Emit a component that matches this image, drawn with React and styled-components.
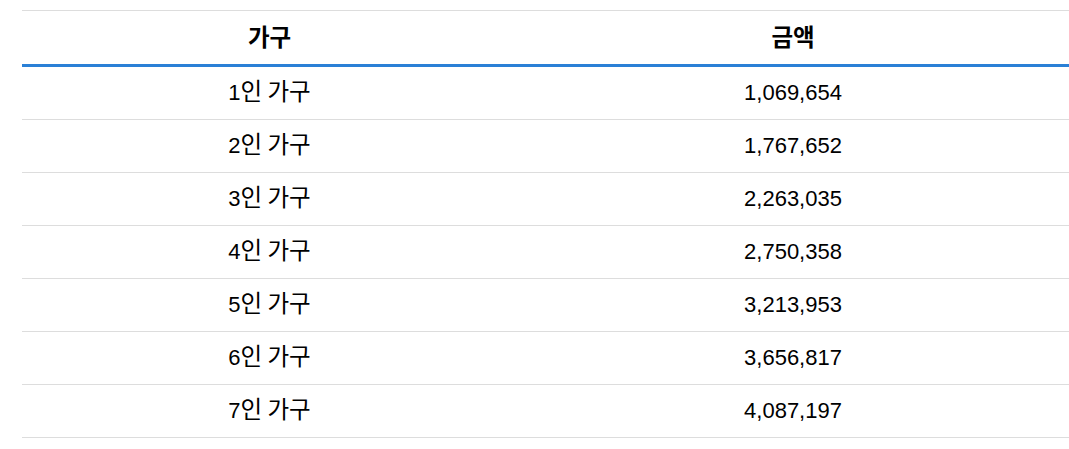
import React from "react";
import styled, { createGlobalStyle } from "styled-components";

const GlobalStyle = createGlobalStyle`
  html, body {
    margin: 0;
    padding: 0;
    background: #fff;
  }

  body {
    font-family: "Liberation Sans", Arial, "Noto Sans CJK KR", sans-serif;
    color: #000;
  }
`;

const Wrapper = styled.div`
  padding: 10px 0 0 22px;
`;

const Table = styled.table`
  width: 1047px;
  border-collapse: collapse;
  table-layout: fixed;
  font-size: 22px;

  col.kind {
    width: 495px;
  }

  col.amount {
    width: 552px;
  }
`;

const HeadCell = styled.th`
  height: 51px;
  padding: 0 0 2px;
  text-align: center;
  font-weight: 700;
  font-family: "Noto Sans CJK KR", sans-serif;
  font-size: 23.5px;
  line-height: 1;
  border-top: 1px solid #dddddd;
  border-bottom: 3px solid #2a80d6;
`;

const Cell = styled.td`
  height: ${(p) => (p.$korean ? "49px" : "51px")};
  padding: 0 0 ${(p) => (p.$korean ? "3px" : "1px")};
  text-align: center;
  line-height: 1;
  border-bottom: 1px solid #dddddd;
  font-family: ${(p) =>
    p.$korean
      ? `"Noto Sans CJK KR", sans-serif`
      : `"Liberation Sans", Arial, sans-serif`};
  font-size: ${(p) => (p.$korean ? "23.5px" : "22px")};
`;

const Num = styled.span`
  font-family: "Liberation Sans", Arial, sans-serif;
  font-size: 22px;
`;

const rows = [
  { n: 1, amount: "1,069,654" },
  { n: 2, amount: "1,767,652" },
  { n: 3, amount: "2,263,035" },
  { n: 4, amount: "2,750,358" },
  { n: 5, amount: "3,213,953" },
  { n: 6, amount: "3,656,817" },
  { n: 7, amount: "4,087,197" },
];

const App = () => {
  return (
    <>
      <GlobalStyle />
      <Wrapper>
        <Table>
          <colgroup>
            <col className="kind" />
            <col className="amount" />
          </colgroup>
          <thead>
            <tr>
              <HeadCell>가구</HeadCell>
              <HeadCell>금액</HeadCell>
            </tr>
          </thead>
          <tbody>
            {rows.map((r) => (
              <tr key={r.n}>
                <Cell $korean>
                  <Num>{r.n}</Num>인 가구
                </Cell>
                <Cell>{r.amount}</Cell>
              </tr>
            ))}
          </tbody>
        </Table>
      </Wrapper>
    </>
  );
};

export default App;
